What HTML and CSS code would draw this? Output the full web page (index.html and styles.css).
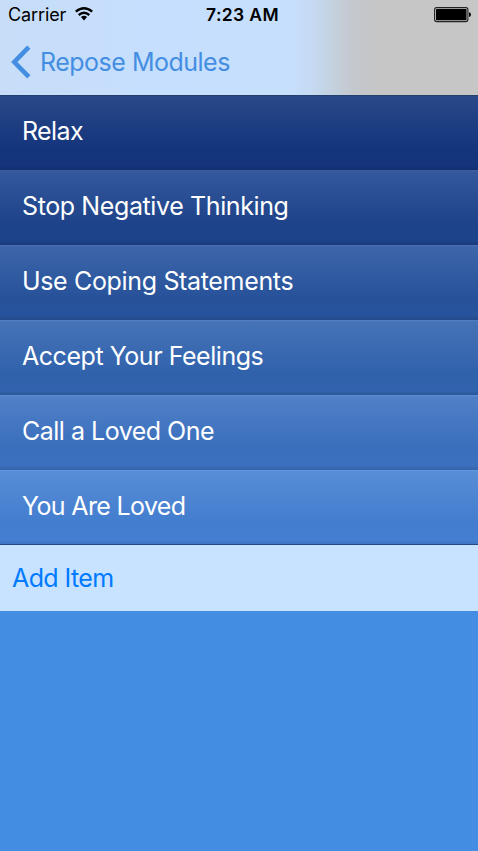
FILE: index.html
```html
<!DOCTYPE html>
<html lang="en">
<head>
<meta charset="utf-8">
<meta name="viewport" content="width=device-width">
<title>Repose Modules</title>
<link rel="stylesheet" href="styles.css">
</head>
<body>
<header class="top">
  <div class="status">
    <div class="carrier"><span class="carrier-name">Carrier</span>
      <svg class="wifi" width="18" height="14" viewBox="0 0 18 14" fill="none" stroke="#000" stroke-width="2.3"><path d="M.8 4.7Q9-2.2 17.2 4.7M3.7 8Q9 3.6 14.3 8"/><path d="M5.9 10.1Q9 7.6 12.1 10.1L9 13.4Z" fill="#000" stroke="none"/></svg>
    </div>
    <time class="clock">7:23 AM</time>
    <svg class="battery" width="37" height="16" viewBox="0 0 37 16"><rect x=".6" y=".6" width="33.3" height="14" rx="2" fill="none" stroke="#222" stroke-width="1.1"/><rect x="2" y="2" width="30.5" height="11.2" rx=".6"/><path d="M35 5.2Q37 5.5 37 7.6T35 10Z"/></svg>
  </div>
  <nav class="nav">
    <svg class="back" width="20" height="34" viewBox="0 0 20 34"><path d="M17.8 2.2L3.3 17L17.8 31.8" fill="none" stroke="#438ee2" stroke-width="4.6"/></svg>
    <a class="back-label">Repose Modules</a>
  </nav>
</header>
<ul class="list">
  <li class="row navy"><span class="relax">Relax</span></li>
  <li class="row deep"><span class="thinking">Stop Negative Thinking</span></li>
  <li class="row royal"><span class="coping">Use Coping Statements</span></li>
  <li class="row medium"><span class="feelings">Accept Your Feelings</span></li>
  <li class="row soft"><span class="call">Call a Loved One</span></li>
  <li class="row light"><span class="loved">You Are Loved</span></li>
</ul>
<div class="add"><span class="add-label">Add Item</span></div>
</body>
</html>
```
FILE: styles.css
```css
* { box-sizing: border-box; }
body {
  margin: 0;
  min-height: 851px;
  background: #438ee2;
  font-family: Inter, "Liberation Sans", sans-serif;
  font-size: 25px;
  white-space: nowrap;
}
.top {
  height: 96px;
  border-bottom: 1px solid #233f70;
  background:
    linear-gradient(90deg, #c7ddf8 0, #c6dffe 150px, #c6dffd 290px, #c5daf2 312px, #c4d2e0 332px, #c4cad2 348px, #c5c6c9 366px, #c6c6c6 385px);
}
.status {
  height: 29px;
  display: grid;
  grid-template-columns: 1fr auto 1fr;
  align-items: center;
  padding: 0 7px 0 8px;
  font-size: 18px;
}
.carrier { display: flex; align-items: center; gap: 9px; }
.carrier-name { letter-spacing: -.1px; }
.wifi { margin-top: -2px; }
.clock { font-weight: 600; font-size: 17.5px; letter-spacing: .35px; margin-left: 6px; }
.battery { justify-self: end; }
.nav {
  height: 66px;
  display: flex;
  align-items: center;
  padding-left: 11px;
  gap: 9px;
  color: #438ee2;
}
.back-label { letter-spacing: -.5px; }
.list { list-style: none; margin: 0; padding: 0; }
.row {
  height: 75px;
  padding: 0 22px 3px;
  display: flex;
  align-items: center;
  color: #fff;
}
.relax { letter-spacing: -.6px; }
.thinking { letter-spacing: -.39px; }
.coping { letter-spacing: -.34px; }
.feelings { letter-spacing: -.46px; }
.call { letter-spacing: -.5px; }
.loved { letter-spacing: -.64px; }
.add-label { letter-spacing: -.6px; }
.navy { height: 74px; padding-bottom: 4px; background: linear-gradient(#29498a, #14357c 70%, #14357c 94%, #122f6f); }
.deep { background: linear-gradient(#3e609f 0, #34589b 2px, #1e438a 70%, #1d438b 94%, #193a7a); }
.royal { background: linear-gradient(#4a70b1 0, #3d66aa 2px, #27529a 70%, #26539c 94%, #234a89); }
.medium { background: linear-gradient(#557fc0 0, #4673b7 2px, #3062ac 70%, #3062ad 94%, #2b5799); }
.soft { background: linear-gradient(#6090d2 0, #5080c7 2px, #3a6fbd 70%, #3b70be 94%, #3563a8); }
.light { background: linear-gradient(#639ae0 0, #588dd6 2px, #437dcf 70%, #447ed1 94%, #3f74c0 74px, #244a86 74px); }
.add {
  height: 66px;
  padding-left: 12px;
  display: flex;
  align-items: center;
  background: #c7e3ff;
  color: #007aff;
}
```
